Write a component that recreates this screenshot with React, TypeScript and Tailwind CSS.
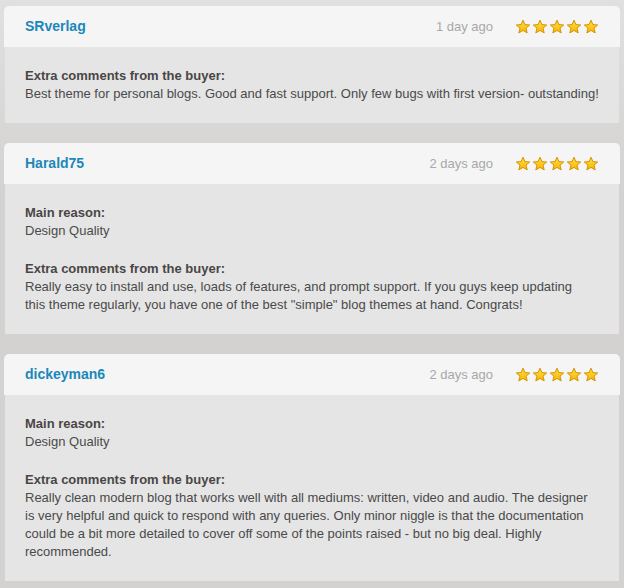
import React from "react";

type Review = {
  user: string;
  when: string;
  reason?: string;
  comment: string[];
};

const reviews: Review[] = [
  {
    user: "SRverlag",
    when: "1 day ago",
    comment: [
      "Best theme for personal blogs. Good and fast support. Only few bugs with first version- outstanding!",
    ],
  },
  {
    user: "Harald75",
    when: "2 days ago",
    reason: "Design Quality",
    comment: [
      "Really easy to install and use, loads of features, and prompt support. If you guys keep updating",
      'this theme regularly, you have one of the best "simple" blog themes at hand. Congrats!',
    ],
  },
  {
    user: "dickeyman6",
    when: "2 days ago",
    reason: "Design Quality",
    comment: [
      "Really clean modern blog that works well with all mediums: written, video and audio. The designer",
      "is very helpful and quick to respond with any queries. Only minor niggle is that the documentation",
      "could be a bit more detailed to cover off some of the points raised - but no big deal. Highly",
      "recommended.",
    ],
  },
];

const Star = () => (
  <svg width="16" height="16" viewBox="0 0 16 16">
    <defs>
      <linearGradient id="starFill" x1="0" y1="0" x2="0" y2="1">
        <stop offset="0" stopColor="#ffe14a" />
        <stop offset="1" stopColor="#f7b500" />
      </linearGradient>
    </defs>
    <path
      d="M8 1.2 L9.9 5.6 L14.7 6 L11 9.1 L12.2 13.9 L8 11.4 L3.8 13.9 L5 9.1 L1.3 6 L6.1 5.6 Z"
      fill="url(#starFill)"
      stroke="#d99200"
      strokeWidth="1"
      strokeLinejoin="round"
    />
  </svg>
);

const ReviewCard = ({ r }: { r: Review }) => (
  <div>
    <div className="h-[41px] flex items-center bg-[#f5f5f5] rounded-t-[5px] pl-[21px] pr-[21px]">
      <span className="text-[14px] font-bold text-[#1b87ba]">{r.user}</span>
      <span className="ml-auto text-[13px] text-[#a8a8a8]">{r.when}</span>
      <div className="flex gap-[1px] ml-[22px]">
        {[0, 1, 2, 3, 4].map((i) => (
          <Star key={i} />
        ))}
      </div>
    </div>
    <div className="mx-[1px] bg-[#e5e5e5] pl-[20px] pr-[10px] py-[20px] text-[13px] leading-[18px] text-[#4a4a4a]">
      {r.reason && (
        <div className="mb-[20px]">
          <div className="font-bold text-[#4a4545]">Main reason:</div>
          <div>{r.reason}</div>
        </div>
      )}
      <div className="font-bold text-[#4a4545]">Extra comments from the buyer:</div>
      {r.comment.map((line, i) => (
        <div key={i} className="whitespace-nowrap">
          {line}
        </div>
      ))}
    </div>
  </div>
);

export default function App() {
  return (
    <div
      className="min-h-[588px] w-[624px] bg-[linear-gradient(#e0e0e0,#d3d2d0_200px)] px-[4px] pt-[6px] pb-[7px] flex flex-col gap-[20px]"
      style={{ fontFamily: '"Liberation Sans", Arial, sans-serif' }}
    >
      {reviews.map((r) => (
        <ReviewCard key={r.user} r={r} />
      ))}
    </div>
  );
}
